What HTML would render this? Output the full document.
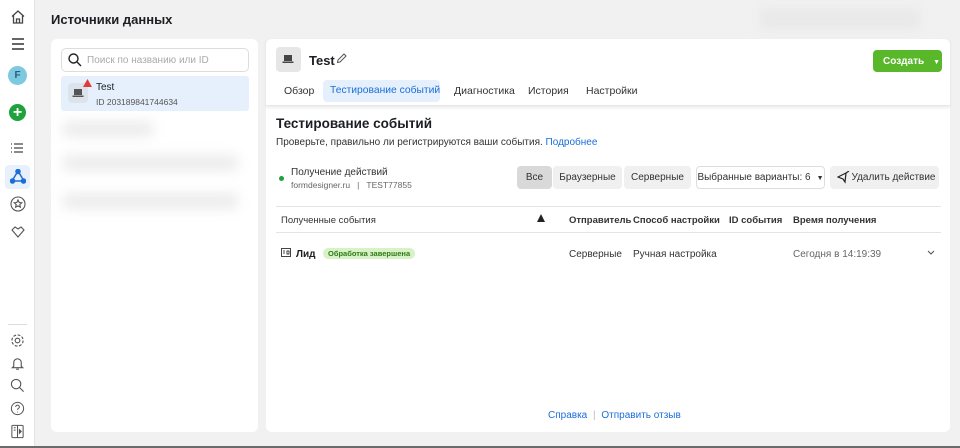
<!DOCTYPE html>
<html><head><meta charset="utf-8"><style>
*{box-sizing:border-box;margin:0;padding:0}
body{width:960px;height:448px;overflow:hidden;background:#f1f1f1;font-family:"Liberation Sans",Arial,sans-serif;color:#1c1e21;position:relative;font-size:11px;white-space:nowrap}
.side{position:absolute;left:0;top:0;width:35px;height:446px;background:#fff;border-right:1px solid #e4e4e4}
.side svg{position:absolute;left:10px}
.bot{position:absolute;left:0;top:446px;width:960px;height:2px;background:#6b6b6b}
h1{position:absolute;left:51px;top:12px;font-size:13px;font-weight:bold}
.left{position:absolute;left:51px;top:39px;width:207px;height:393px;background:#fff;border-radius:6px}
.search{position:absolute;left:10px;top:9px;width:188px;height:24px;border:1px solid #ddd;border-radius:5px;color:#aaa;font-size:10px;padding:6px 0 0 25px}
.item{position:absolute;left:10px;top:37px;width:188px;height:35px;background:#e6f0fd;border-radius:3px}
.blur{position:absolute;left:12px;height:16px;background:#ececec;filter:blur(6px);border-radius:4px}
.main{position:absolute;left:266px;top:39px;width:684px;height:393px;background:#fff;border-radius:6px}
.hdr{position:absolute;left:0;top:0;width:684px;height:67px;border-bottom:1px solid #e6e6e6;box-shadow:0 2px 3px rgba(0,0,0,.08)}
.tab{position:absolute;top:41px;height:22px;padding-top:5px;font-size:10.5px;color:#333}
.btn{position:absolute;height:23px;background:#f0f0f0;border-radius:4px;font-size:10px;color:#333;text-align:center;padding-top:6px}
.th{position:absolute;top:176px;font-size:9.5px;font-weight:bold;color:#333}
.td{position:absolute;top:210px;font-size:10px;color:#333}
.line{position:absolute;left:10px;width:665px;height:1px;background:#e4e4e4}
a{color:#1a6ed8;text-decoration:none}
</style></head><body>
<div class="side">
<svg style="top:9px" width="16" height="16" viewBox="0 0 16 16" fill="none" stroke="#444" stroke-width="1.3"><path d="M2 7.5L8 2l6 5.5M3.5 6.5V14h9V6.5M6.5 14v-4h3v4"/></svg>
<svg style="top:37px" width="16" height="14" viewBox="0 0 16 14" stroke="#333" stroke-width="1.5"><path d="M2 2h12M2 7h12M2 12h12"/></svg>
<div style="position:absolute;left:8px;top:66px;width:19px;height:19px;border-radius:50%;background:#7dc9e0;color:#2a5f78;font-weight:bold;font-size:10px;text-align:center;line-height:19px">F</div>
<div style="position:absolute;left:9px;top:104px;width:17px;height:17px;border-radius:50%;background:#1ea23c;color:#fff;font-weight:bold;font-size:16px;text-align:center;line-height:17px">+</div>
<svg style="top:142px" width="14" height="12" viewBox="0 0 14 12" stroke="#444" stroke-width="1.3"><path d="M1 2h1M4 2h9M1 6h1M4 6h9M1 10h1M4 10h9"/></svg>
<div style="position:absolute;left:5px;top:165px;width:25px;height:24px;background:#e8f0fc;border-radius:4px"></div>
<svg style="top:169px" width="16" height="15" viewBox="0 0 16 15" stroke="#1a6ed8" stroke-width="1.5" fill="#1a6ed8"><path d="M8 2L2 12h12z" fill="none"/><circle cx="8" cy="2.5" r="2"/><circle cx="2.5" cy="12" r="2"/><circle cx="13.5" cy="12" r="2"/></svg>
<svg style="top:196px" width="16" height="16" viewBox="0 0 16 16" fill="none" stroke="#555" stroke-width="1.1"><circle cx="8" cy="8" r="7"/><path d="M8 4l1.2 2.5 2.6.3-2 1.8.6 2.6L8 9.9l-2.4 1.3.6-2.6-2-1.8 2.6-.3z"/></svg>
<svg style="top:225px" width="16" height="14" viewBox="0 0 16 14" fill="none" stroke="#555" stroke-width="1.1"><path d="M2 5l3-3 3 2 3-2 3 3-6 7z"/></svg>
<div style="position:absolute;left:8px;top:324px;width:19px;height:1px;background:#ddd"></div>
<svg style="top:333px" width="15" height="15" viewBox="0 0 16 16" fill="none" stroke="#555" stroke-width="1.2"><circle cx="8" cy="8" r="2.5"/><circle cx="8" cy="8" r="6" stroke-dasharray="3 1.7"/></svg>
<svg style="top:356px" width="15" height="15" viewBox="0 0 16 16" fill="none" stroke="#555" stroke-width="1.2"><path d="M4 11V7a4 4 0 018 0v4l1.5 1.5h-11zM6.5 14h3"/></svg>
<svg style="top:378px" width="15" height="15" viewBox="0 0 16 16" fill="none" stroke="#555" stroke-width="1.2"><circle cx="6.5" cy="6.5" r="5"/><path d="M10 10l4.5 4.5"/></svg>
<svg style="top:401px" width="15" height="15" viewBox="0 0 16 16" fill="none" stroke="#555" stroke-width="1.1"><circle cx="8" cy="8" r="6.5"/><path d="M6 6.3a2 2 0 114 .3c0 1.2-2 1.4-2 2.8M8 11.3v.8"/></svg>
<svg style="top:424px" width="15" height="15" viewBox="0 0 16 16" fill="none" stroke="#555" stroke-width="1.1"><rect x="2" y="1.5" width="12" height="13" rx="1"/><path d="M8 1.5v13M4 4h2M4 6.5h2"/><path d="M10 6l2 2-2 2z" fill="#555"/></svg>
</div>
<div class="bot"></div>
<h1>Источники данных</h1>
<div style="position:absolute;left:760px;top:8px;width:160px;height:22px;background:#e9e9e9;filter:blur(5px);border-radius:6px"></div>
<div class="left">
<div class="search">Поиск по названию или ID</div>
<svg style="position:absolute;left:17px;top:14px" width="14" height="14" viewBox="0 0 14 14" fill="none" stroke="#222" stroke-width="1.4"><circle cx="5.5" cy="5.5" r="4.5"/><path d="M9 9l4 4"/></svg>
<div class="item">
<div style="position:absolute;left:7px;top:7px;width:20px;height:20px;background:#dde3ea;border-radius:4px"></div>
<svg style="position:absolute;left:11px;top:12px" width="12" height="10" viewBox="0 0 12 10"><rect x="2" y="1" width="8" height="6" fill="#555"/><rect x="0.5" y="7.5" width="11" height="1.5" fill="#555"/></svg>
<svg style="position:absolute;left:22px;top:3px" width="9" height="8" viewBox="0 0 9 8"><path d="M4.5 0L9 8H0z" fill="#e23b3b"/></svg>
<div style="position:absolute;left:35px;top:6px;font-size:10px">Test</div>
<div style="position:absolute;left:35px;top:21px;font-size:8.5px;color:#555">ID 203189841744634</div>
</div>
<div class="blur" style="top:82px;width:90px"></div>
<div class="blur" style="top:116px;width:175px"></div>
<div class="blur" style="top:154px;width:175px"></div>
</div>
<div class="main">
<div class="hdr">
<div style="position:absolute;left:10px;top:8px;width:25px;height:25px;background:#e6e6e6;border-radius:4px"></div>
<svg style="position:absolute;left:16px;top:15px" width="12" height="10" viewBox="0 0 12 10"><rect x="2" y="1" width="8" height="6" fill="#444"/><rect x="0.5" y="7.5" width="11" height="1.5" fill="#444"/></svg>
<div style="position:absolute;left:43px;top:14px;font-size:13px;font-weight:bold">Test</div>
<svg style="position:absolute;left:70px;top:14px" width="11" height="11" viewBox="0 0 11 11" fill="none" stroke="#555" stroke-width="1"><path d="M1.5 9.5l.5-2.5 6-6 2 2-6 6z"/></svg>
<div style="position:absolute;left:607px;top:11px;width:69px;height:22px;background:#58b829;border-radius:4px;color:#fff;font-weight:bold;font-size:10px;padding:6px 0 0 10px">Создать<span style="font-size:7px;margin-left:9px">▼</span></div>
<div class="tab" style="left:18px">Обзор</div>
<div class="tab" style="left:57px;width:117px;background:#e6f0fd;border-radius:4px;color:#1a6ed8;padding-left:7px;font-size:10.3px">Тестирование событий</div>
<div class="tab" style="left:188px">Диагностика</div>
<div class="tab" style="left:262px">История</div>
<div class="tab" style="left:320px">Настройки</div>
</div>
<div style="position:absolute;left:10px;top:77px;font-size:13.5px;font-weight:bold">Тестирование событий</div>
<div style="position:absolute;left:10px;top:98px;font-size:10px;color:#333">Проверьте, правильно ли регистрируются ваши события. <a>Подробнее</a></div>
<div style="position:absolute;left:13px;top:137px;width:5px;height:5px;border-radius:50%;background:#1ea23c"></div>
<div style="position:absolute;left:25px;top:128px;font-size:10px;color:#333">Получение действий</div>
<div style="position:absolute;left:25px;top:141px;font-size:8.5px;color:#666">formdesigner.ru &nbsp;&nbsp;| &nbsp;&nbsp;TEST77855</div>
<div class="btn" style="left:251px;top:127px;width:35px;background:#d9d9d9">Все</div>
<div class="btn" style="left:287px;top:127px;width:69px">Браузерные</div>
<div class="btn" style="left:358px;top:127px;width:67px">Серверные</div>
<div class="btn" style="left:430px;top:127px;width:129px;background:#fff;border:1px solid #ddd;padding-top:5px">Выбранные варианты: 6<span style="font-size:7px;margin-left:6px">▼</span></div>
<div class="btn" style="left:564px;top:127px;width:109px;padding-left:18px">Удалить действие</div>
<svg style="position:absolute;left:571px;top:132px" width="14" height="13" viewBox="0 0 14 13" fill="none" stroke="#222" stroke-width="1.2"><path d="M1 6l8-4-1 9-2-3zM9 2l3-2"/></svg>
<div class="line" style="top:167px"></div>
<div class="th" style="left:15px;font-weight:normal">Полученные события</div>
<svg style="position:absolute;left:271px;top:175px" width="8" height="8" viewBox="0 0 8 8"><path d="M4 0l4 8H0z" fill="#222"/></svg>
<div class="th" style="left:303px">Отправитель</div>
<div class="th" style="left:367px">Способ настройки</div>
<div class="th" style="left:463px">ID события</div>
<div class="th" style="left:527px">Время получения</div>
<div class="line" style="top:193px"></div>
<svg style="position:absolute;left:15px;top:209px" width="10" height="9" viewBox="0 0 10 9" fill="none" stroke="#444" stroke-width="1"><rect x=".5" y=".5" width="9" height="8"/><path d="M2 3h2M2 5h2M6 3h2v3H6z"/></svg>
<div class="td" style="left:30px;font-weight:bold;color:#1c1e21">Лид</div>
<div style="position:absolute;left:57px;top:209px;height:11px;padding:1px 5px;background:#d6f2c6;border-radius:6px;font-size:7.5px;font-weight:bold;color:#2f7a16">Обработка завершена</div>
<div class="td" style="left:303px">Серверные</div>
<div class="td" style="left:367px">Ручная настройка</div>
<div class="td" style="left:527px;color:#666">Сегодня в 14:19:39</div>
<svg style="position:absolute;left:661px;top:211px" width="8" height="5" viewBox="0 0 8 5" fill="none" stroke="#555" stroke-width="1.1"><path d="M1 1l3 3 3-3"/></svg>
<div style="position:absolute;left:282px;top:371px;font-size:10px"><a>Справка</a> <span style="color:#bbb;margin:0 3px">|</span> <a>Отправить отзыв</a></div>
</div>
</body></html>
